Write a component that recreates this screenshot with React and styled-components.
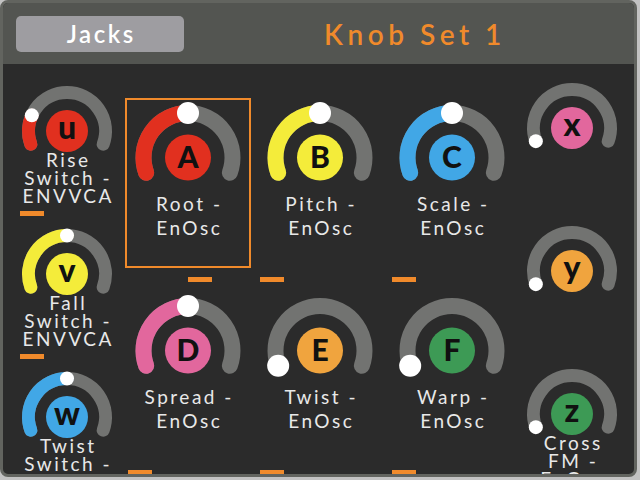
import React from "react";
import styled, { createGlobalStyle } from "styled-components";

const ORANGE = "#f08a2b";
const TRACK = "#727371";

const GlobalStyle = createGlobalStyle`
  html, body {
    margin: 0;
    padding: 0;
    background: #c2c2c2;
  }
  body {
    font-family: Lato, "Open Sans", sans-serif;
  }
`;

const Panel = styled.div`
  width: 637px;
  height: 477px;
  box-sizing: border-box;
  border: 3px solid #62645f;
  border-radius: 8px;
  overflow: hidden;
  display: flex;
  flex-direction: column;
  background: #2b2b2b;
`;

const Header = styled.header`
  height: 61px;
  flex-shrink: 0;
  display: flex;
  align-items: center;
  padding-left: 13px;
  background: #535551;
`;

const TabButton = styled.button`
  width: 168px;
  height: 36px;
  border: none;
  border-radius: 5px;
  background: #9e9da1;
  color: #ffffff;
  font-family: Lato, "Open Sans", sans-serif;
  font-size: 24px;
  font-weight: 600;
  letter-spacing: 2.5px;
  padding: 0 0 0 2.5px;
`;

const Title = styled.h1`
  flex: 1;
  margin: 0;
  padding-left: 12px;
  text-align: center;
  color: ${ORANGE};
  font-size: 28px;
  font-weight: 600;
  letter-spacing: 4.5px;
`;

const Body = styled.main`
  flex: 1;
  display: flex;
  align-items: flex-start;
  padding-left: 13px;
  overflow: hidden;
`;

const SideColumn = styled.div`
  width: 102px;
  flex-shrink: 0;
  display: flex;
  flex-direction: column;
  padding-top: ${(p) => p.$top}px;
  margin-left: ${(p) => p.$gap || 0}px;
`;

const SmallCell = styled.div`
  height: 143px;
  flex-shrink: 0;
  display: flex;
  flex-direction: column;
  align-items: center;
`;

const SmallLabel = styled.div`
  color: #e8e8e8;
  font-size: 19px;
  line-height: 18px;
  letter-spacing: 2.5px;
  padding-left: 2.5px;
  text-align: center;
  white-space: pre-line;
  min-height: 54px;
`;

const KnobGrid = styled.div`
  display: grid;
  grid-template-columns: repeat(3, 132px);
  grid-auto-rows: 193px;
  padding-top: 32px;
  margin-left: 4px;
  flex-shrink: 0;
`;

const BigCell = styled.div`
  display: flex;
  flex-direction: column;
`;

const KnobFrame = styled.div`
  height: 170px;
  margin: 2px 3px 0;
  box-sizing: border-box;
  border: 2px solid ${(p) => (p.$selected ? ORANGE : "transparent")};
  padding-top: 5px;
  display: flex;
  flex-direction: column;
  align-items: center;
`;

const BigLabel = styled.div`
  margin-top: 11px;
  color: #e8e8e8;
  font-size: 19px;
  line-height: 24px;
  letter-spacing: 2.5px;
  padding-left: 2.5px;
  text-align: center;
  white-space: pre-line;
`;

const Bar = styled.div`
  width: 24px;
  height: 5px;
  background: ${ORANGE};
  align-self: flex-start;
  margin-top: ${(p) => p.$top}px;
  margin-left: ${(p) => p.$left}px;
`;

const KnobSvg = styled.svg`
  display: block;
  flex-shrink: 0;
  overflow: visible;
`;

const KnobLetter = styled.text`
  font-family: Lato, "Open Sans", sans-serif;
  font-weight: 900;
  fill: #111111;
`;

const SWEEP = 110;

const SIZES = {
  big: { w: 106, h: 76, r: 44.5, stroke: 16, face: 23, dot: 11, font: 30 },
  small: { w: 92, h: 65, r: 38.5, stroke: 13, face: 21, dot: 7, font: 32 },
};

const polar = (cx, cy, r, deg) => {
  const a = (deg * Math.PI) / 180;
  return [cx + r * Math.sin(a), cy - r * Math.cos(a)];
};

const arcPath = (cx, cy, r, from, to) => {
  const [x1, y1] = polar(cx, cy, r, from);
  const [x2, y2] = polar(cx, cy, r, to);
  const large = to - from > 180 ? 1 : 0;
  return `M ${x1} ${y1} A ${r} ${r} 0 ${large} 1 ${x2} ${y2}`;
};

function Knob({ size, color, value, letter }) {
  const s = SIZES[size];
  const cx = s.w / 2;
  const cy = s.r + s.stroke / 2;
  const angle = -SWEEP + value * 2 * SWEEP;
  const [dx, dy] = polar(cx, cy, s.r, angle);
  const caps = letter === letter.toUpperCase();
  const baseline = cy + (caps ? 0.36 : 0.25) * s.font;

  return (
    <KnobSvg width={s.w} height={s.h} viewBox={`0 0 ${s.w} ${s.h}`}>
      <path
        d={arcPath(cx, cy, s.r, -SWEEP, SWEEP)}
        stroke={TRACK}
        strokeWidth={s.stroke}
        strokeLinecap="round"
        fill="none"
      />
      {value > 0 && (
        <path
          d={arcPath(cx, cy, s.r, -SWEEP, angle)}
          stroke={color}
          strokeWidth={s.stroke}
          strokeLinecap="round"
          fill="none"
        />
      )}
      <circle cx={cx} cy={cy} r={s.face} fill={color} />
      <KnobLetter x={cx} y={baseline} fontSize={s.font} textAnchor="middle">
        {letter}
      </KnobLetter>
      <circle cx={dx} cy={dy} r={s.dot} fill="#ffffff" />
    </KnobSvg>
  );
}

const leftKnobs = [
  { letter: "u", color: "#e1301f", value: 0.2, name: "Rise\nSwitch -\nENVVCA", bar: true },
  { letter: "v", color: "#f4ec3a", value: 0.5, name: "Fall\nSwitch -\nENVVCA", bar: true },
  { letter: "w", color: "#41a7e6", value: 0.5, name: "Twist\nSwitch -\nENVVCA", bar: true },
];

const rightKnobs = [
  { letter: "x", color: "#e2679d", value: 0, name: "", bar: false },
  { letter: "y", color: "#f0a43e", value: 0, name: "", bar: false },
  { letter: "z", color: "#3d9a55", value: 0, name: "Cross\nFM -\nEnOsc", bar: true },
];

const bigKnobs = [
  { letter: "A", color: "#e1301f", value: 0.5, name: "Root -\nEnOsc", selected: true },
  { letter: "B", color: "#f4ec3a", value: 0.5, name: "Pitch -\nEnOsc" },
  { letter: "C", color: "#41a7e6", value: 0.5, name: "Scale -\nEnOsc" },
  { letter: "D", color: "#e2679d", value: 0.5, name: "Spread -\nEnOsc" },
  { letter: "E", color: "#f0a43e", value: 0, name: "Twist -\nEnOsc" },
  { letter: "F", color: "#3d9a55", value: 0, name: "Warp -\nEnOsc" },
];

function SmallKnobCell({ knob }) {
  return (
    <SmallCell>
      <Knob size="small" color={knob.color} value={knob.value} letter={knob.letter} />
      <SmallLabel>{knob.name}</SmallLabel>
      {knob.bar && <Bar $top={6} $left={4} />}
    </SmallCell>
  );
}

export default function App() {
  return (
    <>
      <GlobalStyle />
      <Panel>
        <Header>
          <TabButton>Jacks</TabButton>
          <Title>Knob Set 1</Title>
        </Header>
        <Body>
          <SideColumn $top={22}>
            {leftKnobs.map((k) => (
              <SmallKnobCell key={k.letter} knob={k} />
            ))}
          </SideColumn>
          <KnobGrid>
            {bigKnobs.map((k) => (
              <BigCell key={k.letter}>
                <KnobFrame $selected={k.selected}>
                  <Knob size="big" color={k.color} value={k.value} letter={k.letter} />
                  <BigLabel>{k.name}</BigLabel>
                </KnobFrame>
                <Bar $top={9} $left={k.selected ? 66 : 6} />
              </BigCell>
            ))}
          </KnobGrid>
          <SideColumn $top={19} $gap={3}>
            {rightKnobs.map((k) => (
              <SmallKnobCell key={k.letter} knob={k} />
            ))}
          </SideColumn>
        </Body>
      </Panel>
    </>
  );
}
